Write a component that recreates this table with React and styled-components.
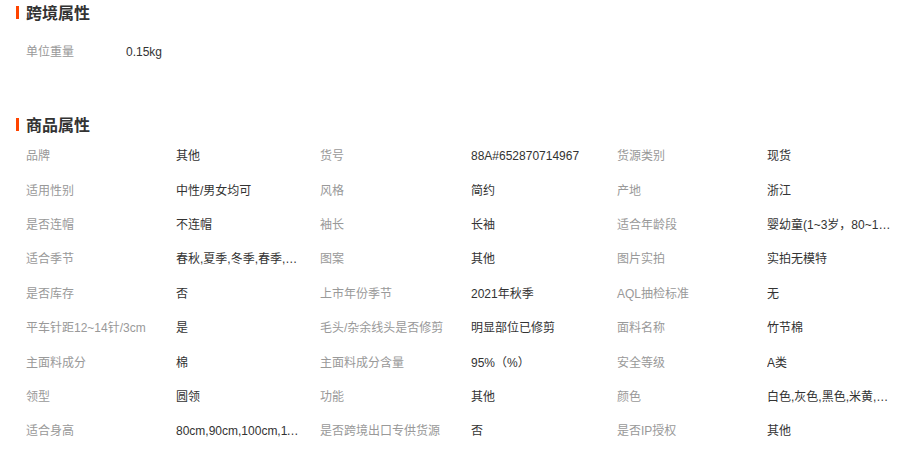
import React from 'react';
import styled, { createGlobalStyle } from 'styled-components';

const GlobalStyle = createGlobalStyle`
  html, body {
    margin: 0;
    padding: 0;
    background: #fff;
  }
  body {
    font-family: "Liberation Sans", "Noto Sans CJK SC", sans-serif;
    font-size: 12px;
    color: #333;
  }
`;

const Page = styled.div`
  width: 923px;
  height: 450px;
  overflow: hidden;
  background: #fff;
`;

const Section = styled.section`
  margin-bottom: ${props => props.gap || 0}px;
`;

const Title = styled.h3`
  display: flex;
  align-items: center;
  gap: 7px;
  margin: 0;
  padding-left: 16px;
  height: 24px;
  font-family: "Noto Sans CJK SC", sans-serif;
  font-size: 16px;
  font-weight: 700;
  color: #333;
  line-height: 24px;

  &::before {
    content: '';
    display: block;
    width: 3px;
    height: 13px;
    background: #ff4400;
  }
`;

const Grid = styled.div`
  display: grid;
  grid-template-columns: 150px 144px 151px 146px 150px 1fr;
  grid-auto-rows: 34.4px;
  align-items: center;
  padding-left: 26px;
  margin-top: ${props => props.top}px;
`;

const Label = styled.div`
  color: #999;
  white-space: nowrap;
  line-height: 18px;
`;

const Value = styled.div`
  color: #333;
  max-width: ${props => (props.narrow ? 'none' : '124px')};
  white-space: nowrap;
  overflow: hidden;
  text-overflow: ellipsis;
  line-height: 18px;
`;

const SingleRow = styled.div`
  display: grid;
  grid-template-columns: 100px 1fr;
  align-items: center;
  height: 34px;
  padding-left: 26px;
  margin-top: ${props => props.top}px;
`;

const goodsAttrs = [
  ['品牌', '其他'],
  ['货号', '88A#652870714967'],
  ['货源类别', '现货'],
  ['适用性别', '中性/男女均可'],
  ['风格', '简约'],
  ['产地', '浙江'],
  ['是否连帽', '不连帽'],
  ['袖长', '长袖'],
  ['适合年龄段', '婴幼童(1~3岁，80~100cm)'],
  ['适合季节', '春秋,夏季,冬季,春季,秋季'],
  ['图案', '其他'],
  ['图片实拍', '实拍无模特'],
  ['是否库存', '否'],
  ['上市年份季节', '2021年秋季'],
  ['AQL抽检标准', '无'],
  ['平车针距12~14针/3cm', '是'],
  ['毛头/杂余线头是否修剪', '明显部位已修剪'],
  ['面料名称', '竹节棉'],
  ['主面料成分', '棉'],
  ['主面料成分含量', '95%（%）'],
  ['安全等级', 'A类'],
  ['领型', '圆领'],
  ['功能', '其他'],
  ['颜色', '白色,灰色,黑色,米黄,粉色'],
  ['适合身高', '80cm,90cm,100cm,110cm'],
  ['是否跨境出口专供货源', '否'],
  ['是否IP授权', '其他'],
];

const App = () => (
  <Page>
    <GlobalStyle />
    <Section gap={43}>
      <Title>跨境属性</Title>
      <SingleRow top={11}>
        <Label>单位重量</Label>
        <Value narrow>0.15kg</Value>
      </SingleRow>
    </Section>
    <Section>
      <Title>商品属性</Title>
      <Grid top={3}>
        {goodsAttrs.map(([k, v]) => (
          <React.Fragment key={k}>
            <Label>{k}</Label>
            <Value>{v}</Value>
          </React.Fragment>
        ))}
      </Grid>
    </Section>
  </Page>
);

export default App;
